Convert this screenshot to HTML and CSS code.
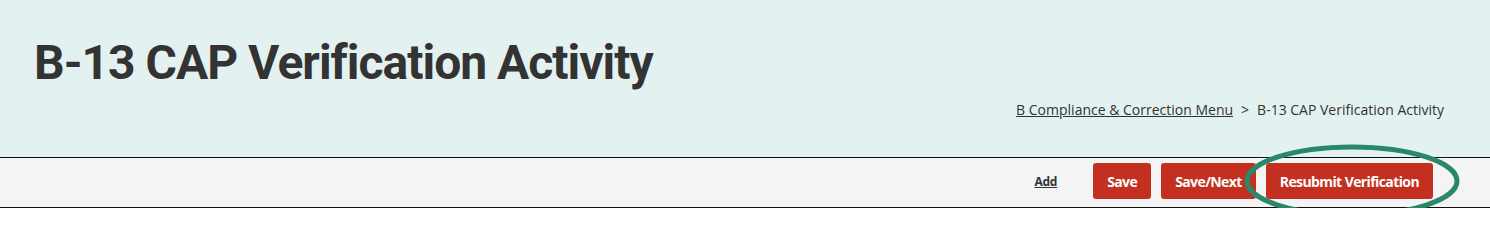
FILE: index.html
```html
<!DOCTYPE html>
<html lang="en">
<head>
<meta charset="utf-8">
<title>B-13 CAP Verification Activity</title>
<link rel="stylesheet" href="styles.css">
</head>
<body>
<header class="page-header">
  <h1 class="page-title">B-13 CAP Verification Activity</h1>
  <nav class="breadcrumb">
    <a href="#" class="crumb-link">B Compliance &amp; Correction Menu</a>
    <span class="crumb-sep">&gt;</span>
    <span class="crumb-current">B-13 CAP Verification Activity</span>
  </nav>
</header>
<div class="toolbar">
  <a href="#" class="add-link">Add</a>
  <button class="btn">Save</button>
  <button class="btn">Save/Next</button>
  <span class="highlight">
    <button class="btn">Resubmit Verification</button>
    <svg class="highlight-ring" width="220" height="80" viewBox="0 0 220 80" aria-hidden="true">
      <ellipse cx="110" cy="40" rx="105" ry="34" fill="none" stroke="#2a8769" stroke-width="5"/>
    </svg>
  </span>
</div>
</body>
</html>
```
FILE: styles.css
```css
html, body {
  margin: 0;
  padding: 0;
  background: #ffffff;
}
body {
  font-family: "Open Sans", "Liberation Sans", sans-serif;
  color: #333;
}
.page-header {
  background: #e3f2f1;
  height: 158px;
  box-sizing: border-box;
  padding: 35px 46px 0 34px;
  display: flex;
  flex-direction: column;
  border-bottom: 1px solid #111;
}
.page-title {
  margin: 0;
  font-family: Roboto, "Liberation Sans", sans-serif;
  font-weight: 700;
  font-size: 48px;
  line-height: 56px;
  letter-spacing: -1px;
  color: #333333;
}
.breadcrumb {
  align-self: flex-end;
  margin-top: 9px;
  font-size: 14px;
  line-height: 20px;
  color: #333;
  display: flex;
  gap: 8px;
}
.crumb-link {
  color: #333;
  text-decoration: underline;
}
.toolbar {
  background: #f4f4f4;
  height: 50px;
  box-sizing: border-box;
  border-bottom: 1px solid #111;
  display: flex;
  align-items: center;
  justify-content: flex-end;
  padding: 0 57px 3px 0;
  gap: 10px;
}
.add-link {
  font-size: 12px;
  font-weight: 700;
  color: #333;
  text-decoration: underline;
  margin-right: 26px;
  letter-spacing: -0.3px;
}
.btn {
  background: #c3301f;
  color: #fff;
  border: none;
  border-radius: 3px;
  height: 36px;
  padding: 0 14px;
  font-family: "Open Sans", "Liberation Sans", sans-serif;
  font-weight: 700;
  font-size: 14px;
  letter-spacing: -0.6px;
}
.highlight {
  position: relative;
  display: flex;
}
.highlight-ring {
  position: absolute;
  left: -24px;
  top: -22px;
  overflow: visible;
  pointer-events: none;
}
```
